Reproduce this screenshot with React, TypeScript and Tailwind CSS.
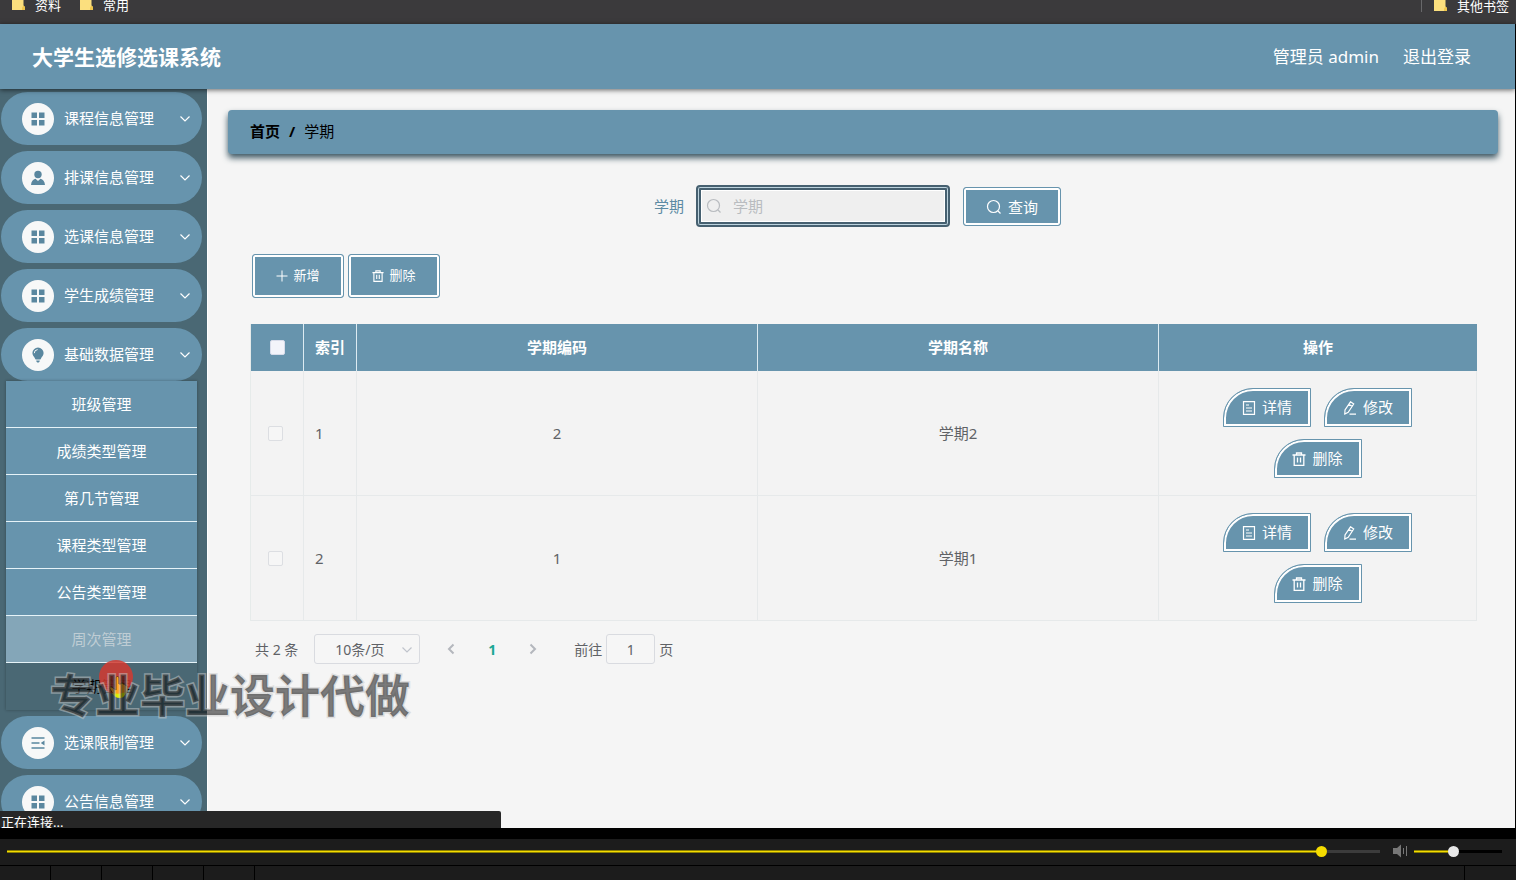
import { useState } from 'react'
import type { ReactNode } from 'react'

type IconProps = { className?: string }

function GridIcon() {
  return (
    <svg viewBox="0 0 14 14" className="w-[14px] h-[14px]" fill="currentColor">
      <path d="M.5.5h5.500V6H.5zM8 .5h5.500V6H8zM.5 8h5.500v5.500H.5zM8 8h5.500v5.500H8z" />
    </svg>
  )
}

function UserIcon() {
  return (
    <svg viewBox="0 0 16 16" className="w-4 h-4" fill="currentColor">
      <circle cx="8" cy="4.5" r="3.7" />
      <path d="M1 15c.3-3.600 2-5.800 4.500-6.200L8 11l2.500-2.200C13 9.200 14.700 11.400 15 15z" />
    </svg>
  )
}

function BulbIcon() {
  return (
    <svg viewBox="0 0 16 16" className="w-4 h-4" fill="currentColor">
      <path d="M8 .5a5.600 5.600 0 0 0-5.600 5.600c0 2.400 1.600 3.500 2.600 5.400.3.600.5 1 1.200 1h3.600c.7 0 .9-.4 1.200-1 1-1.900 2.600-3 2.600-5.400A5.600 5.600 0 0 0 8 .5z" />
      <path d="M6.300 13.400h3.400v.6c0 .8-.7 1.500-1.700 1.500s-1.700-.7-1.700-1.500z" />
      <path d="M4.300 6.200A3.600 3.600 0 0 1 7.600 2.600" fill="none" stroke="#f7f8f8" strokeWidth="1" />
    </svg>
  )
}

function ListIcon() {
  return (
    <svg viewBox="0 0 14 14" className="w-[14px] h-[14px]" fill="none" stroke="currentColor" strokeWidth="1.6">
      <path d="M.5 2h13M.5 7h8M.5 12h13" />
      <path d="M13.500 4.600v4.800L9.800 7z" fill="currentColor" stroke="none" />
    </svg>
  )
}

function Chevron({ className }: IconProps) {
  return (
    <svg viewBox="0 0 12 12" className={className} fill="none" stroke="currentColor" strokeWidth="1.200">
      <path d="M1.500 3.500 6 8l4.500-4.500" />
    </svg>
  )
}

function SearchIcon({ className }: IconProps) {
  return (
    <svg viewBox="0 0 16 16" className={className} fill="none" stroke="currentColor" strokeWidth="1.200">
      <circle cx="7.500" cy="7.500" r="6" />
      <path d="m12 12 2.500 2.500" />
    </svg>
  )
}

function PlusIcon() {
  return (
    <svg viewBox="0 0 12 12" className="w-3 h-3" fill="none" stroke="currentColor">
      <path d="M6 .5v11M.5 6h11" />
    </svg>
  )
}

function TrashIcon({ className }: IconProps) {
  return (
    <svg viewBox="0 0 14 14" className={className} fill="none" stroke="currentColor" strokeWidth="1.300">
      <path d="M.5 3h13M4.500 3V1h5v2M2.200 3v10.300h9.600V3M5.500 5.500v5M8.500 5.500v5" />
    </svg>
  )
}

function DetailIcon() {
  return (
    <svg viewBox="0 0 14 14" className="w-[14px] h-[14px]" fill="none" stroke="currentColor" strokeWidth="1.200">
      <path d="M1.500.6h11v12.800h-11zM4 4h3M4 7h6M4 10h6" />
    </svg>
  )
}

function EditIcon() {
  return (
    <svg viewBox="0 0 14 14" className="w-[14px] h-[14px]" fill="none" stroke="currentColor" strokeWidth="1.200">
      <path d="M7.500.8 10.700 3 5.200 11.300 1.800 13l.2-4zM6 3.200l3.200 2.200M6.500 13.200H13" />
    </svg>
  )
}

function Folder() {
  return (
    <svg viewBox="0 0 14 14" className="w-[14px] h-[14px]">
      <path d="M0 0h11.500v7.500L13 9v3H0z" fill="#fbdf7e" />
      <path d="M10 12V9.500l1.500-2L13 9v3z" fill="#efc64c" />
    </svg>
  )
}

const topMenus: { label: string; icon: ReactNode }[] = [
  { label: '课程信息管理', icon: <GridIcon /> },
  { label: '排课信息管理', icon: <UserIcon /> },
  { label: '选课信息管理', icon: <GridIcon /> },
  { label: '学生成绩管理', icon: <GridIcon /> },
  { label: '基础数据管理', icon: <BulbIcon /> },
]

const bottomMenus: { label: string; icon: ReactNode }[] = [
  { label: '选课限制管理', icon: <ListIcon /> },
  { label: '公告信息管理', icon: <GridIcon /> },
]

const subMenus = ['班级管理', '成绩类型管理', '第几节管理', '课程类型管理', '公告类型管理']

const rows = [
  { id: 1, code: '2', name: '学期2' },
  { id: 2, code: '1', name: '学期1' },
]

function MenuItem({ label, icon }: { label: string; icon: ReactNode }) {
  return (
    <button className="flex items-center shrink-0 w-full h-[53px] rounded-full bg-[#6794ad] pl-[21px] pr-[11px] text-[15px] text-white">
      <span className="flex items-center justify-center w-8 h-8 mr-[10px] rounded-full bg-[#f7f8f8] text-[#5a879f]">
        {icon}
      </span>
      {label}
      <Chevron className="w-3 h-3 ml-auto" />
    </button>
  )
}

function ActionButton({ label, icon }: { label: string; icon: ReactNode }) {
  return (
    <button className="flex items-center justify-center gap-[6px] w-[88px] h-[39px] rounded-tl-[30px] border border-[#6794ad] bg-[#6794ad] text-[15px] text-white shadow-[inset_0_0_0_2px_#fff]">
      {icon}
      {label}
    </button>
  )
}

export default function App() {
  const [keyword, setKeyword] = useState('')
  const [page, setPage] = useState('1')

  return (
    <div className="flex flex-col h-screen overflow-hidden bg-black font-['Noto_Sans','Noto_Sans_CJK_SC',sans-serif]">
      <div className="flex items-start justify-between shrink-0 h-6 overflow-hidden bg-[#3b3a3c] pl-3 pr-[7px] text-[13px] leading-[10px] text-white">
        <div className="flex gap-[19px]">
          <a href="#" className="flex items-center gap-[9px] h-[10px]"><Folder />资料</a>
          <a href="#" className="flex items-center gap-[9px] h-[10px]"><Folder />常用</a>
        </div>
        <a href="#" className="flex items-center gap-[9px] h-3 border-l border-[#68686a] pl-3"><Folder />其他书签</a>
      </div>

      <div className="relative flex flex-col flex-1 min-h-0 mr-px bg-[#f5f5f5]">
        <header className="relative z-10 flex items-center justify-between shrink-0 h-[65px] bg-[#6794ad] pl-8 pr-11 text-white shadow-[0_1px_5px_rgba(0,0,0,0.6)]">
          <h1 className="pt-[2px] text-[21px] font-bold">大学生选修选课系统</h1>
          <div className="flex gap-6 text-[17px]">
            <span>管理员 admin</span>
            <a href="#">退出登录</a>
          </div>
        </header>

        <div className="flex flex-1 min-h-0">
          <nav className="flex flex-col gap-[6px] shrink-0 w-[208px] overflow-hidden bg-[#4a6874] border-r border-white pt-[3px] pl-px pr-[5px]">
            {topMenus.map((menu) => (
              <MenuItem key={menu.label} label={menu.label} icon={menu.icon} />
            ))}
            <ul className="shrink-0 -mt-[6px] mx-[5px] text-center text-[15px] text-white shadow-[0_0_3px_rgba(0,0,0,0.3)]">
              {subMenus.map((label) => (
                <li key={label} className="h-[47px] border-b border-[#e6f3f8] bg-[#6794ad]">
                  <a href="#" className="block leading-[46px]">{label}</a>
                </li>
              ))}
              <li className="h-[47px] border-b border-[#e6f3f8] bg-[#84a6b8]">
                <a href="#" className="block leading-[46px] text-[#bfcdd4]">周次管理</a>
              </li>
              <li className="h-[47px]">
                <a href="#" className="block leading-[46px] text-black">学期管理</a>
              </li>
            </ul>
            {bottomMenus.map((menu) => (
              <MenuItem key={menu.label} label={menu.label} icon={menu.icon} />
            ))}
          </nav>

          <main className="flex-1 min-w-0 pl-5 pr-[17px] pt-[21px]">
            <div className="flex items-center gap-[9px] h-[44px] rounded-[4px] bg-[#6794ad] px-[22px] pb-[2px] text-[15px] text-black shadow-[0_4px_6px_#3d5763]">
              <a href="#" className="font-bold">首页</a>
              <span className="font-bold">/</span>
              <span>学期</span>
            </div>

            <div className="pl-[22px] pr-[21px]">
              <form className="flex items-center justify-center mt-[31px] pr-3 text-[15px]" onSubmit={(e) => e.preventDefault()}>
                <label htmlFor="term" className="mr-3 text-[#5d8ba4]">学期</label>
                <div className="relative mr-[13px]">
                  <SearchIcon className="absolute left-[10px] top-[13px] w-4 h-4 text-[#b9bcc0]" />
                  <input
                    id="term"
                    value={keyword}
                    onChange={(e) => setKeyword(e.target.value)}
                    placeholder="学期"
                    className="block w-[254px] h-[42px] rounded-[4px] border-2 border-[#466070] bg-[#efefef] pl-[35px] outline-none shadow-[inset_0_0_0_1px_#bcd3de,inset_0_0_0_3px_#466070,inset_0_0_0_4px_#fff] placeholder:text-[#b9bcc0]"
                  />
                </div>
                <button className="flex items-center justify-center gap-[6px] w-[98px] h-[39px] rounded-[3px] border border-[#6794ad] bg-[#6794ad] pt-[2px] text-white shadow-[inset_0_0_0_2px_#fff]">
                  <SearchIcon className="w-4 h-4" />
                  查询
                </button>
              </form>

              <div className="flex gap-1 mt-[27px] pl-[2px] text-[13px] text-white">
                <button className="flex items-center justify-center gap-[5px] w-[92px] h-11 rounded-[3px] border border-[#6794ad] bg-[#6794ad] shadow-[inset_0_0_0_2px_#fff]">
                  <PlusIcon />
                  新增
                </button>
                <button className="flex items-center justify-center gap-[5px] w-[92px] h-11 rounded-[3px] border border-[#6794ad] bg-[#6794ad] shadow-[inset_0_0_0_2px_#fff]">
                  <TrashIcon className="w-3 h-3" />
                  删除
                </button>
              </div>

              <table className="w-full mt-[26px] table-fixed border-separate border-spacing-0 border-l border-[#e6ebea] text-[15px] text-[#5f6266]">
                <colgroup>
                  <col className="w-[53px]" />
                  <col className="w-[53px]" />
                  <col />
                  <col />
                  <col className="w-[318px]" />
                </colgroup>
                <thead>
                  <tr className="h-[47px] bg-[#6794ad] text-white">
                    <th className="border-r border-[#dcebf2]">
                      <input type="checkbox" aria-label="全选" className="block mx-auto w-[15px] h-[15px] appearance-none rounded-[2px] border border-[#d8dcea] bg-[#f3f4fa]" />
                    </th>
                    <th className="border-r border-[#dcebf2]">索引</th>
                    <th className="border-r border-[#dcebf2]">学期编码</th>
                    <th className="border-r border-[#dcebf2]">学期名称</th>
                    <th>操作</th>
                  </tr>
                </thead>
                <tbody>
                  {rows.map((row) => (
                    <tr key={row.id} className="h-[125px] bg-[#f3f3f3] text-center">
                      <td className="border-r border-b border-[#e6e9ea]">
                        <input type="checkbox" aria-label={row.name} className="block ml-[17px] w-[15px] h-[15px] appearance-none rounded-[2px] border border-[#dcdee2] bg-[#f6f6f6]" />
                      </td>
                      <td className="border-r border-b border-[#e6e9ea] pl-[11px] text-left">{row.id}</td>
                      <td className="border-r border-b border-[#e6e9ea]">{row.code}</td>
                      <td className="border-r border-b border-[#e6e9ea]">{row.name}</td>
                      <td className="border-r border-b border-[#e6e9ea]">
                        <div className="flex flex-wrap justify-center gap-x-[13px] gap-y-3 px-[50px]">
                          <ActionButton label="详情" icon={<DetailIcon />} />
                          <ActionButton label="修改" icon={<EditIcon />} />
                          <ActionButton label="删除" icon={<TrashIcon className="w-[14px] h-[14px]" />} />
                        </div>
                      </td>
                    </tr>
                  ))}
                </tbody>
              </table>

              <div className="flex items-center mt-[13px] pl-[5px] text-[14px] text-[#606266]">
                <span>共 2 条</span>
                <div className="relative ml-4">
                  <select aria-label="每页条数" className="block w-[106px] h-[30px] appearance-none rounded-[3px] border border-[#d9dbe0] bg-[#f6f6f6] pl-5">
                    <option>10条/页</option>
                  </select>
                  <Chevron className="absolute right-[7px] top-[10px] w-3 h-3 text-[#c0c4cc]" />
                </div>
                <button aria-label="上一页" className="ml-[25px] text-[#b4b7bd]">
                  <Chevron className="w-3 h-3 rotate-90 stroke-2" />
                </button>
                <button className="w-[70px] font-bold text-[#1aa794]">1</button>
                <button aria-label="下一页" className="text-[#b4b7bd]">
                  <Chevron className="w-3 h-3 -rotate-90 stroke-2" />
                </button>
                <label className="flex items-center gap-1 ml-[35px]">
                  前往
                  <input
                    value={page}
                    onChange={(e) => setPage(e.target.value)}
                    className="w-[49px] h-[30px] rounded-[3px] border border-[#d9dbe0] bg-[#f6f6f6] text-center"
                  />
                  页
                </label>
              </div>
            </div>
          </main>
        </div>

        {/* click marker with the hand pointer */}
        <svg viewBox="0 0 36 44" className="absolute left-[99px] top-[635px] w-9 h-11">
          <circle cx="17" cy="18" r="17" fill="#d23a30" fillOpacity=".85" />
          <path d="M17 19c0-2 3-2 3 0v6h2v-1h2v1h2v1l2 1v5c-1 4-3 6-7 6-5 0-7-3-10-8-1-2 1-3 3-1l3 2z" fill="#ffa51c" stroke="#5b3412" />
          <path d="M13 34c5 1 9 1 14-1-1 4-3 6-6 6-4 0-6-2-8-5z" fill="#dcf000" />
        </svg>

        <p className="absolute left-[50px] top-[639px] text-[45px] leading-[66px] font-bold whitespace-nowrap pointer-events-none text-black/50 [paint-order:stroke] [-webkit-text-stroke:3px_rgba(200,200,200,0.5)]">
          专业毕业设计代做
        </p>

        <div className="absolute left-0 bottom-0 z-10 w-[501px] h-[17px] overflow-hidden rounded-tr-[2px] bg-[#272727] pl-px pt-[3px] text-[13px] leading-4 text-white">
          正在连接...
        </div>
      </div>

      <footer className="shrink-0 pt-[11px]">
        <div className="flex items-center h-[26px] bg-[#1c1c1c] pl-[7px] pr-[14px] pb-[2px]">
          <div className="flex items-center flex-1 h-[3px] bg-[#3c3c3c]">
            <div className="w-[96%] h-[3px] border-y border-[#8b8000] bg-[#f5dc00]" />
            <div className="w-[11px] h-[11px] -ml-[9px] shrink-0 rounded-full bg-[#f5dc00]" />
          </div>
          <svg viewBox="0 0 16 14" className="w-4 h-[14px] ml-3 mr-[6px]" fill="#777">
            <path d="M1 4h4l4-3.500v13L5 10H1z" />
            <path d="M11 4h1v6h-1zM14 2h1v10h-1z" />
          </svg>
          <div className="flex items-center w-[88px] h-[3px] bg-black">
            <div className="w-[39px] h-[3px] border-y border-[#8b8000] bg-[#f5dc00]" />
            <div className="w-[11px] h-[11px] -ml-[5px] shrink-0 rounded-full bg-[#e8e8e8]" />
          </div>
        </div>
        <div className="flex h-[15px] border-t border-black bg-[#1c1c1c]">
          {[1, 2, 3, 4, 5].map((n) => (
            <div key={n} className="w-[51px] border-r border-black" />
          ))}
          <div className="w-[52px] ml-auto border-l border-black" />
        </div>
      </footer>
    </div>
  )
}
